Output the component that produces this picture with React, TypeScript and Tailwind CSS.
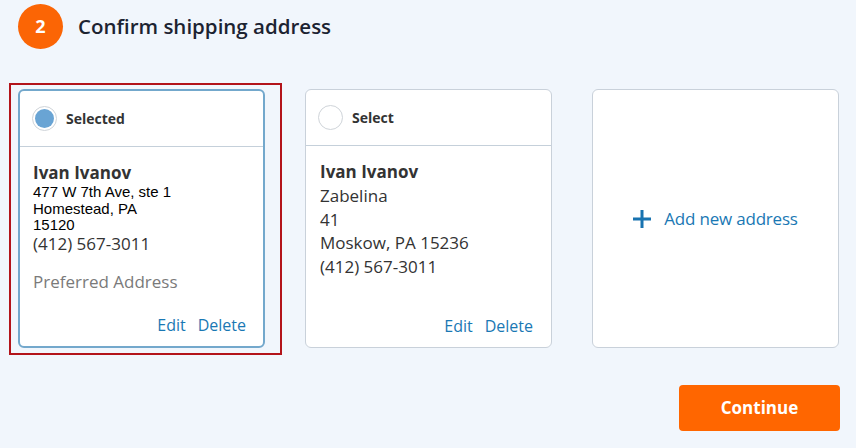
import { useState } from "react";

type Address = {
  id: number;
  name: string;
  lines: string[];
  phone: string;
  preferred?: boolean;
};

const addresses: Address[] = [
  {
    id: 1,
    name: "Ivan Ivanov",
    lines: ["477 W 7th Ave, ste 1", "Homestead, PA", "15120"],
    phone: "(412) 567-3011",
    preferred: true,
  },
  {
    id: 2,
    name: "Ivan Ivanov",
    lines: ["Zabelina", "41", "Moskow, PA 15236"],
    phone: "(412) 567-3011",
  },
];

function Radio({ checked }: { checked: boolean }) {
  return (
    <span className="flex h-[25px] w-[25px] items-center justify-center rounded-full border border-[#cfd4d9] bg-white">
      {checked && <span className="h-[19px] w-[19px] rounded-full bg-[#69a4d4]" />}
    </span>
  );
}

function AddressCard({
  address,
  selected,
  onSelect,
}: {
  address: Address;
  selected: boolean;
  onSelect: () => void;
}) {
  return (
    <div
      className={
        selected
          ? "flex h-[259px] w-[247px] flex-col rounded-[6px] border-2 border-[#73a8cc] bg-white"
          : "flex h-[259px] w-[247px] flex-col rounded-[6px] border border-[#c9d1da] bg-white"
      }
    >
      <div
        className="flex h-[56px] items-center gap-[9px] border-b border-[#c5d0da] pl-[12px]"
        onClick={onSelect}
      >
        <Radio checked={selected} />
        <span className="text-[14px] font-bold text-[#333]">
          {selected ? "Selected" : "Select"}
        </span>
      </div>
      <div
        className={
          selected
            ? "flex flex-1 flex-col px-[13px] pb-[9px] pt-[14px]"
            : "flex flex-1 flex-col px-[14px] pb-[9px] pt-[14px]"
        }
      >
        <div className="text-[17px] font-bold leading-[24px] text-[#333]">{address.name}</div>
        {address.preferred ? (
          <>
            <div className="-mt-[1px] font-['Liberation_Sans',Arial,sans-serif] text-[15px] leading-[16.5px] text-black">
              {address.lines.map((l) => (
                <div key={l}>{l}</div>
              ))}
            </div>
            <div className="-mt-[1px] text-[17px] leading-[22px] text-[#333]">{address.phone}</div>
            <div className="mt-[15px] text-[17px] leading-[24px] text-[#7a7a7a]">
              Preferred Address
            </div>
          </>
        ) : (
          <div className="text-[17px] leading-[23.5px] text-[#333]">
            {address.lines.map((l) => (
              <div key={l}>{l}</div>
            ))}
            <div>{address.phone}</div>
          </div>
        )}
        <div className="mt-auto flex justify-end gap-[12px] pr-[4px] text-[16px] leading-[24px] text-[#1a78b4]">
          <a className="cursor-pointer">Edit</a>
          <a className="cursor-pointer">Delete</a>
        </div>
      </div>
    </div>
  );
}

export default function App() {
  const [selectedId, setSelectedId] = useState(1);

  return (
    <div className="flex h-[448px] w-[856px] flex-col bg-[#f1f6fc] pl-[18px] pr-[16px] font-['Open_Sans',sans-serif]">
      <div className="mt-[4px] flex items-center gap-[15px]">
        <span className="flex h-[45px] w-[45px] items-center justify-center rounded-full bg-[#fb6505] text-[18px] font-bold text-white">
          2
        </span>
        <h2 className="text-[20.5px] font-semibold text-[#1c2331]">Confirm shipping address</h2>
      </div>

      <div className="mt-[40px] flex gap-[40px]">
        {addresses.map((a) => (
          <div key={a.id} className="relative">
            {selectedId === a.id && (
              <span className="pointer-events-none absolute -bottom-[7px] -left-[9px] -right-[17px] -top-[6px] border-2 border-[#b3141a]" />
            )}
            <AddressCard
              address={a}
              selected={selectedId === a.id}
              onSelect={() => setSelectedId(a.id)}
            />
          </div>
        ))}
        <div className="flex h-[259px] w-[247px] items-center justify-center rounded-[6px] border border-[#c9d1da] bg-white">
          <button className="flex items-center gap-[13px] text-[17px] text-[#1a78b4]">
            <svg width="18" height="18" viewBox="0 0 18 18">
              <path d="M9 0v18M0 9h18" stroke="#1873b0" strokeWidth="3" />
            </svg>
            <span className="tracking-[-0.2px]">Add new address</span>
          </button>
        </div>
      </div>

      <div className="mt-[37px] flex justify-end">
        <button className="h-[46px] w-[161px] rounded-[4px] bg-[#ff6600] text-[17px] font-bold text-white">
          Continue
        </button>
      </div>
    </div>
  );
}
